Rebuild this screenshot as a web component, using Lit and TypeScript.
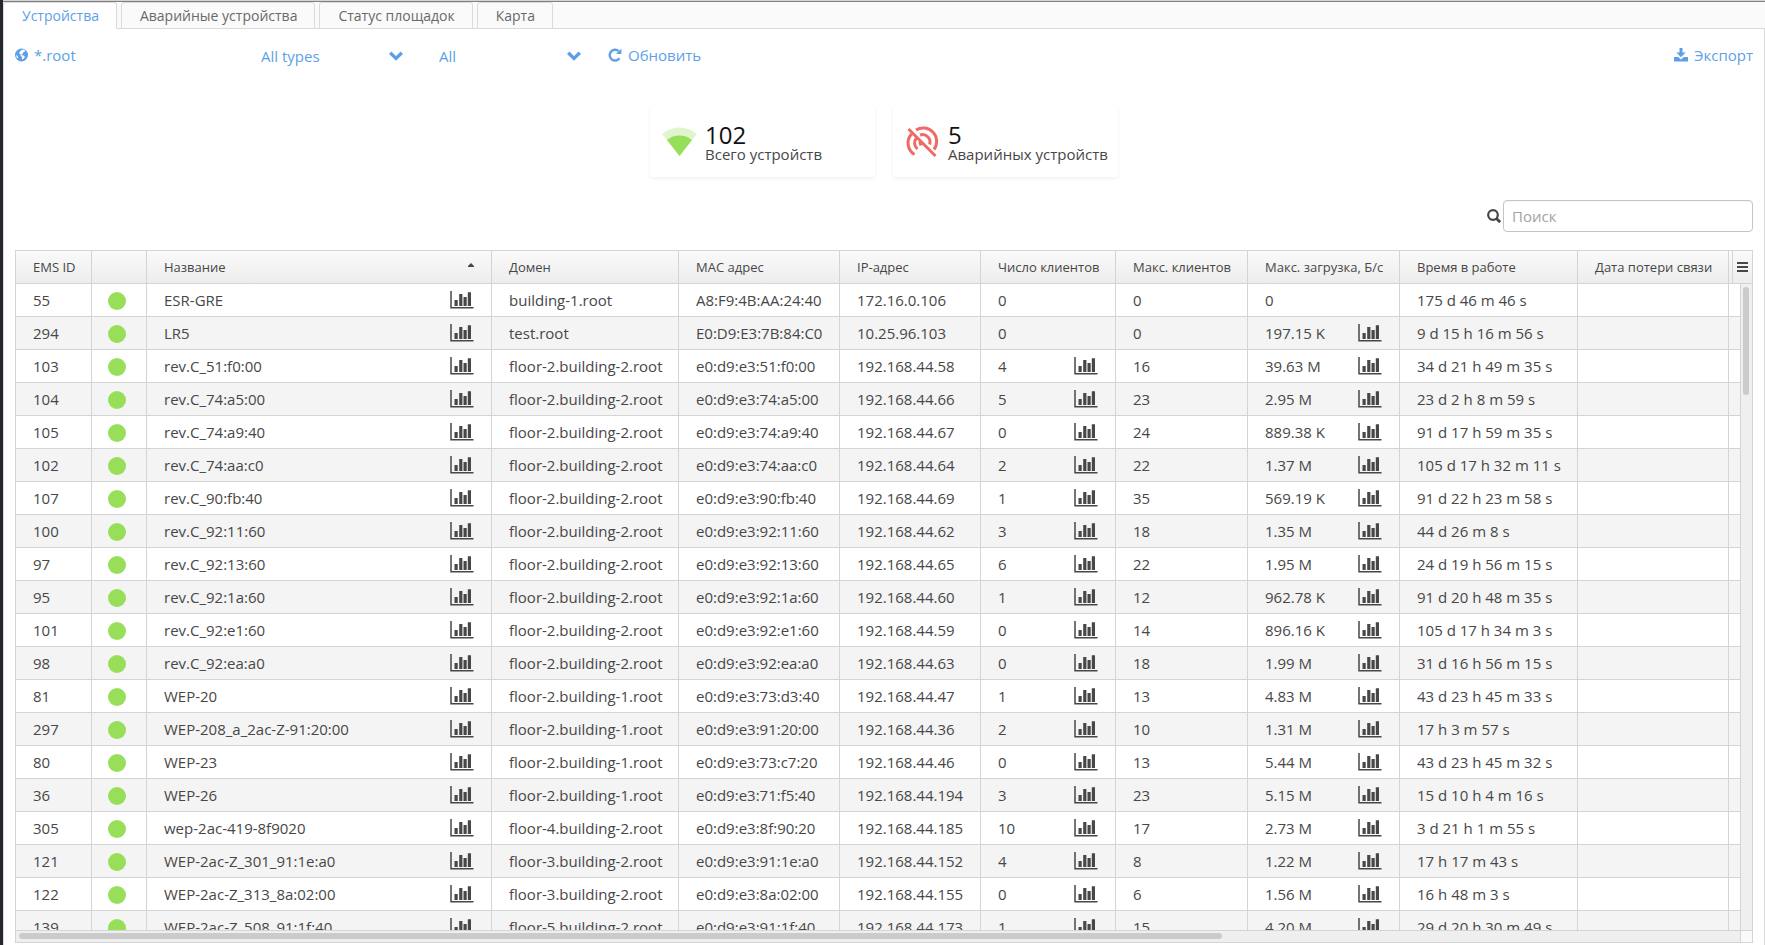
import { LitElement, html, css, nothing } from "lit";
import { customElement, state } from "lit/decorators.js";
import { classMap } from "lit/directives/class-map.js";

interface Device {
  id: number;
  name: string;
  domain: string;
  mac: string;
  ip: string;
  clients: number;
  clientsChart: boolean;
  maxClients: number;
  load: string;
  loadChart: boolean;
  uptime: string;
}

type Row = [number, string, string, string, string, number, number, string, string];

const rows: Row[] = [
  [55, "ESR-GRE", "building-1.root", "A8:F9:4B:AA:24:40", "172.16.0.106", 0, 0, "0", "175 d 46 m 46 s"],
  [294, "LR5", "test.root", "E0:D9:E3:7B:84:C0", "10.25.96.103", 0, 0, "197.15 K", "9 d 15 h 16 m 56 s"],
  [103, "rev.C_51:f0:00", "floor-2.building-2.root", "e0:d9:e3:51:f0:00", "192.168.44.58", 4, 16, "39.63 M", "34 d 21 h 49 m 35 s"],
  [104, "rev.C_74:a5:00", "floor-2.building-2.root", "e0:d9:e3:74:a5:00", "192.168.44.66", 5, 23, "2.95 M", "23 d 2 h 8 m 59 s"],
  [105, "rev.C_74:a9:40", "floor-2.building-2.root", "e0:d9:e3:74:a9:40", "192.168.44.67", 0, 24, "889.38 K", "91 d 17 h 59 m 35 s"],
  [102, "rev.C_74:aa:c0", "floor-2.building-2.root", "e0:d9:e3:74:aa:c0", "192.168.44.64", 2, 22, "1.37 M", "105 d 17 h 32 m 11 s"],
  [107, "rev.C_90:fb:40", "floor-2.building-2.root", "e0:d9:e3:90:fb:40", "192.168.44.69", 1, 35, "569.19 K", "91 d 22 h 23 m 58 s"],
  [100, "rev.C_92:11:60", "floor-2.building-2.root", "e0:d9:e3:92:11:60", "192.168.44.62", 3, 18, "1.35 M", "44 d 26 m 8 s"],
  [97, "rev.C_92:13:60", "floor-2.building-2.root", "e0:d9:e3:92:13:60", "192.168.44.65", 6, 22, "1.95 M", "24 d 19 h 56 m 15 s"],
  [95, "rev.C_92:1a:60", "floor-2.building-2.root", "e0:d9:e3:92:1a:60", "192.168.44.60", 1, 12, "962.78 K", "91 d 20 h 48 m 35 s"],
  [101, "rev.C_92:e1:60", "floor-2.building-2.root", "e0:d9:e3:92:e1:60", "192.168.44.59", 0, 14, "896.16 K", "105 d 17 h 34 m 3 s"],
  [98, "rev.C_92:ea:a0", "floor-2.building-2.root", "e0:d9:e3:92:ea:a0", "192.168.44.63", 0, 18, "1.99 M", "31 d 16 h 56 m 15 s"],
  [81, "WEP-20", "floor-2.building-1.root", "e0:d9:e3:73:d3:40", "192.168.44.47", 1, 13, "4.83 M", "43 d 23 h 45 m 33 s"],
  [297, "WEP-208_a_2ac-Z-91:20:00", "floor-2.building-1.root", "e0:d9:e3:91:20:00", "192.168.44.36", 2, 10, "1.31 M", "17 h 3 m 57 s"],
  [80, "WEP-23", "floor-2.building-1.root", "e0:d9:e3:73:c7:20", "192.168.44.46", 0, 13, "5.44 M", "43 d 23 h 45 m 32 s"],
  [36, "WEP-26", "floor-2.building-1.root", "e0:d9:e3:71:f5:40", "192.168.44.194", 3, 23, "5.15 M", "15 d 10 h 4 m 16 s"],
  [305, "wep-2ac-419-8f9020", "floor-4.building-2.root", "e0:d9:e3:8f:90:20", "192.168.44.185", 10, 17, "2.73 M", "3 d 21 h 1 m 55 s"],
  [121, "WEP-2ac-Z_301_91:1e:a0", "floor-3.building-2.root", "e0:d9:e3:91:1e:a0", "192.168.44.152", 4, 8, "1.22 M", "17 h 17 m 43 s"],
  [122, "WEP-2ac-Z_313_8a:02:00", "floor-3.building-2.root", "e0:d9:e3:8a:02:00", "192.168.44.155", 0, 6, "1.56 M", "16 h 48 m 3 s"],
  [139, "WEP-2ac-Z_508_91:1f:40", "floor-5.building-2.root", "e0:d9:e3:91:1f:40", "192.168.44.173", 1, 15, "4.20 M", "29 d 20 h 30 m 49 s"],
];

const devices: Device[] = rows.map(([id, name, domain, mac, ip, clients, maxClients, load, uptime]) => ({
  id, name, domain, mac, ip, clients, maxClients, load, uptime,
  clientsChart: maxClients > 0,
  loadChart: load !== "0",
}));

const tabs = ["Устройства", "Аварийные устройства", "Статус площадок", "Карта"];

const chevron = html`<svg class="chevron" viewBox="0 0 14 10" aria-hidden="true">
  <path d="M1.2 1.8 7 7.4l5.800-5.600" fill="none" stroke="currentColor" stroke-width="3.400" />
</svg>`;

const chart = html`<svg class="chart" viewBox="0 0 24 18" aria-hidden="true">
  <path d="M1 0v16.800h22.500" fill="none" stroke="currentColor" stroke-width="1.500" />
  <path d="M4.500 9h3.200v6H4.500zM9.200 3h3.200v12H9.200zM13.500 6h3.200v9h-3.200zM17.800 1.200h3.200v13.800h-3.200z" fill="currentColor" />
</svg>`;

@customElement("app-root")
export class AppRoot extends LitElement {
  @state() private active = 0;

  static styles = css`
    :host {
      display: flex;
      flex-direction: column;
      box-sizing: border-box;
      height: 100vh;
      overflow: hidden;
      border-left: 3px solid #24282c;
      background: #fff;
      color: #474747;
      font: 15px/20px "Open Sans", "Noto Sans", sans-serif;
    }
    * { box-sizing: border-box; }
    button, input, select { font: inherit; color: inherit; margin: 0; }
    button { border: 0; padding: 0; background: none; cursor: pointer; }
    svg { display: block; flex: none; }

    .tabs {
      display: flex;
      flex: none;
      gap: 4px;
      height: 29px;
      border-top: 1px solid #d4d4d4;
      background: linear-gradient(#808080 1px, #fafafa 1px);
      box-shadow: inset 0 -1px #dadada;
      padding-top: 1px;
    }
    .tab {
      border: 1px solid #dadada;
      border-radius: 3px 3px 0 0;
      padding: 0 17px 0 18px;
      color: #696969;
      font-size: 14px;
      line-height: 24px;
      background: #fafafa;
    }
    .tab.active { background: #fff; color: #5d9fe8; border-bottom-color: #fff; }

    .page {
      display: flex;
      flex: 1;
      flex-direction: column;
      min-height: 0;
      padding: 13px 11px 2px;
      border-right: 1px solid #dadada;
      border-left: 1px solid #dadada;
    }
    .toolbar { display: flex; align-items: center; height: 26px; color: #5d9fe8; }
    .tool { display: flex; align-items: center; gap: 6px; }
    .root { width: 246px; }
    .pickers { display: flex; gap: 36px; margin-right: 27px; padding-top: 2px; }
    .picker { position: relative; display: flex; align-items: center; width: 142px; }
    .picker select {
      width: 100%;
      appearance: none;
      border: 0;
      padding: 0;
      background: none;
      outline: 0;
    }
    .chevron { position: absolute; right: 0; width: 14px; height: 10px; pointer-events: none; }
    .export { margin-left: auto; }

    .cards { display: flex; justify-content: center; gap: 18px; padding-top: 38px; }
    .card {
      display: flex;
      align-items: center;
      gap: 8px;
      width: 225px;
      height: 71px;
      padding-left: 12px;
      border-radius: 4px;
      box-shadow: 0 2px 4px rgba(0, 0, 0, 0.06);
    }
    .figures { padding-top: 4px; }
    .count { color: #111; font-size: 24px; line-height: 20px; }
    .caption { line-height: 18px; }

    .search { display: flex; justify-content: flex-end; align-items: center; gap: 2px; margin: 23px 0 18px; }
    .search input {
      width: 250px;
      height: 32px;
      border: 1px solid #c5c5c5;
      border-radius: 4px;
      padding: 0 8px;
      background: #fff;
      box-shadow: inset 0 1px 0 #f7f7f7;
      outline: 0;
    }
    .search input::placeholder { color: #a3a3a3; opacity: 1; }

    .grid {
      position: relative;
      display: flex;
      flex: 1;
      flex-direction: column;
      min-height: 0;
      border: 1px solid #d4d4d4;
    }
    .viewport { flex: 1; min-height: 0; overflow: hidden; }
    table { width: 100%; table-layout: fixed; border-collapse: separate; border-spacing: 0; }
    th, td {
      height: 33px;
      padding: 0 0 0 17px;
      border-right: 1px solid #d4d4d4;
      border-bottom: 1px solid #d4d4d4;
      text-align: left;
      font-weight: 400;
      white-space: nowrap;
      overflow: hidden;
    }
    th { background: linear-gradient(#fafafa, #ededed); font-size: 13px; }
    tr:nth-child(even) td { background: #f4f4f4; }
    td:last-child { border-right: 0; }
    th.late { text-align: right; padding-right: 16px; }
    .split { display: flex; align-items: center; justify-content: space-between; padding-right: 17px; }
    .chart { width: 24px; height: 18px; }
    .state { padding: 2px 0 0 16px; }
    .dot { display: block; width: 18px; height: 18px; border-radius: 9px; background: #97df58; }
    .c-id { width: 76px; }
    .c-state { width: 55px; }
    .c-domain { width: 187px; }
    .c-mac { width: 161px; }
    .c-ip { width: 141px; }
    .c-clients { width: 135px; }
    .c-max { width: 132px; }
    .c-load { width: 152px; }
    .c-time { width: 178px; }
    .c-late { width: 151px; }
    .c-rest { width: 23px; }

    .menu {
      position: absolute;
      top: 0;
      right: 0;
      display: flex;
      align-items: center;
      justify-content: center;
      width: 20px;
      height: 33px;
      border-left: 1px solid #d4d4d4;
      border-bottom: 1px solid #d4d4d4;
      background: linear-gradient(#fafafa, #ededed);
    }
    .vbar {
      position: absolute;
      top: 33px;
      right: 0;
      bottom: 12px;
      width: 12px;
      padding: 3px 2px;
      border-left: 1px solid #d4d4d4;
      background: #efefef;
    }
    .vthumb { width: 6px; height: 108px; border-radius: 3px; background: #cbcbcb; }
    .hbar {
      display: flex;
      flex: none;
      height: 12px;
      border-top: 1px solid #d4d4d4;
      background: #efefef;
    }
    .htrack { flex: 1; padding: 2px 3px; }
    .hthumb { width: 70%; height: 6px; border-radius: 3px; background: #cbcbcb; }
    .corner { width: 12px; border-left: 1px solid #d4d4d4; background: #fafafa; }
  `;

  private renderRow(d: Device) {
    return html`<tr>
      <td>${d.id}</td>
      <td class="state"><span class="dot"></span></td>
      <td><div class="split">${d.name}${chart}</div></td>
      <td>${d.domain}</td>
      <td>${d.mac}</td>
      <td>${d.ip}</td>
      <td><div class="split">${d.clients}${d.clientsChart ? chart : nothing}</div></td>
      <td>${d.maxClients}</td>
      <td><div class="split">${d.load}${d.loadChart ? chart : nothing}</div></td>
      <td>${d.uptime}</td>
      <td></td>
      <td></td>
    </tr>`;
  }

  render() {
    return html`
      <nav class="tabs" role="tablist">
        ${tabs.map((t, i) => html`<button role="tab" aria-selected=${i === this.active}
          class=${classMap({ tab: true, active: i === this.active })}
          @click=${() => (this.active = i)}>${t}</button>`)}
      </nav>
      <main class="page">
        <div class="toolbar">
          <div class="root"><button class="tool">
            <svg width="13" height="14" viewBox="0 0 13 14" aria-hidden="true">
              <circle cx="6.500" cy="7" r="6.500" fill="currentColor" />
              <path d="M6.800 2 8.600 1.500l1.600 1-.6 1.300-1.300.4-.4 1.200-1.300.9.3 1 1.700.1 1.200 1.100-.6 1.700-1.400 1.200-.9-.7-.1-2-1.300-1.200.1-1.200L4.600 5.600l-.5-1 1-1.100.6-.9zM1.200 6.700l1.300 1.100.7 1.700-.7.900L1.500 9z" fill="#fff" />
            </svg>*.root</button></div>
          <div class="pickers">
            <div class="picker"><select aria-label="Type"><option>All types</option></select>${chevron}</div>
            <div class="picker"><select aria-label="State"><option>All</option></select>${chevron}</div>
          </div>
          <button class="tool">
            <svg width="14" height="14" viewBox="0 0 14 14" aria-hidden="true">
              <path d="M11.500 10.300A5.400 5.400 0 1 1 10.600 3" fill="none" stroke="currentColor" stroke-width="2.400" />
              <path d="M13.400.6v5.400H8z" fill="currentColor" />
            </svg>Обновить</button>
          <button class="tool export">
            <svg width="14" height="14" viewBox="0 0 14 14" aria-hidden="true">
              <path d="M5.500 0h3v4.500h3.200L7 9.200 2.300 4.500h3.200zM0 9h4.200L7 11.500 9.800 9H14v4.500H0z" fill="currentColor" />
            </svg>Экспорт</button>
        </div>

        <section class="cards">
          <div class="card">
            <svg width="35" height="35" viewBox="0 0 35 35" aria-hidden="true">
              <path d="M0 10A27 27 0 0 1 35 10L17.500 32z" fill="#97df58" opacity=".3" />
              <path d="M5 16a20 20 0 0 1 25 0L17.500 32z" fill="#97df58" />
            </svg>
            <div class="figures"><div class="count">102</div><div class="caption">Всего устройств</div></div>
          </div>
          <div class="card">
            <svg width="35" height="35" viewBox="0 0 35 35" fill="none" stroke="#ef6a66" stroke-width="3" aria-hidden="true">
              <path d="M3.500 5 30.500 32" />
              <path d="M9.500 30.500A13.500 13.500 0 0 1 6.500 10M11 6A13.500 13.500 0 0 1 29 25.500" />
              <path d="M12.500 25A7.500 7.500 0 0 1 11.500 14M15 11A7.500 7.500 0 0 1 24.600 20.500" />
              <path d="M16 21.500l-1.300-4" />
            </svg>
            <div class="figures"><div class="count">5</div><div class="caption">Аварийных устройств</div></div>
          </div>
        </section>

        <div class="search">
          <label for="q" aria-label="Поиск">
            <svg width="14" height="14" viewBox="0 0 14 14" fill="none" stroke="currentColor" aria-hidden="true">
              <circle cx="6" cy="6" r="4.800" stroke-width="2.200" />
              <path d="m9.400 9.400 3.800 3.800" stroke-width="2.800" />
            </svg>
          </label>
          <input id="q" type="text" placeholder="Поиск" />
        </div>

        <div class="grid">
          <div class="viewport">
            <table>
              <thead>
                <tr>
                  <th class="c-id">EMS ID</th>
                  <th class="c-state"></th>
                  <th><div class="split">Название
                    <svg width="6" height="10" viewBox="0 0 6 10" aria-hidden="true"><path d="M0 5V4l3-3 3 3v1z" fill="currentColor" /></svg>
                  </div></th>
                  <th class="c-domain">Домен</th>
                  <th class="c-mac">MAC адрес</th>
                  <th class="c-ip">IP-адрес</th>
                  <th class="c-clients">Число клиентов</th>
                  <th class="c-max">Макс. клиентов</th>
                  <th class="c-load">Макс. загрузка, Б/с</th>
                  <th class="c-time">Время в работе</th>
                  <th class="c-late late">Дата потери связи</th>
                  <th class="c-rest"></th>
                </tr>
              </thead>
              <tbody>${devices.map((d) => this.renderRow(d))}</tbody>
            </table>
          </div>
          <div class="hbar"><div class="htrack"><div class="hthumb"></div></div><div class="corner"></div></div>
          <button class="menu" aria-label="Columns">
            <svg width="11" height="10" viewBox="0 0 11 10" aria-hidden="true">
              <path d="M0 0h11v2H0zM0 4h11v2H0zM0 8h11v2H0z" fill="currentColor" />
            </svg>
          </button>
          <div class="vbar"><div class="vthumb"></div></div>
        </div>
      </main>
    `;
  }
}
